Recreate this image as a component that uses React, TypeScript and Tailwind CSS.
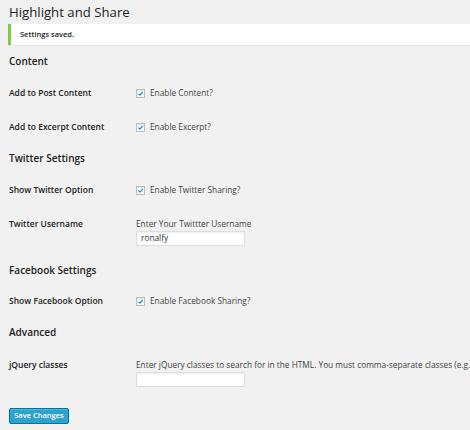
import React from "react";

function Check({ label }: { label: string }) {
  return (
    <label className="flex items-center gap-[5px] text-[8.3px] text-[#444]">
      <span className="flex h-[9px] w-[9px] items-center justify-center border border-[#bbb] bg-white shadow-[inset_0_1px_1px_rgba(0,0,0,0.1)]">
        <svg viewBox="0 0 10 10" className="h-[7px] w-[7px]">
          <path d="M2 5.2 L4.2 7.4 L8.2 2.6" fill="none" stroke="#1e8cbe" strokeWidth="1.8" />
        </svg>
      </span>
      {label}
    </label>
  );
}

function Row({ label, children }: { label: string; children: React.ReactNode }) {
  return (
    <div className="flex h-[34px] items-center">
      <div className="w-[127px] text-[8.5px] font-semibold text-[#222]">{label}</div>
      {children}
    </div>
  );
}

function Heading({ children, className }: { children: React.ReactNode; className: string }) {
  return <h3 className={"h-[16px] text-[10px] font-semibold leading-[16px] text-[#222] " + className}>{children}</h3>;
}

export default function App() {
  return (
    <div className="h-[430px] w-[470px] overflow-hidden bg-[#f1f1f1] pl-[9px] font-['Open_Sans',sans-serif]">
      <h2 className="h-[24px] text-[13.2px] leading-[24px] text-[#222]">Highlight and Share</h2>

      <div className="-ml-[1px] flex h-[21px] items-center border-l-[3px] border-[#7ad03a] bg-white pl-[9px] shadow-[0_1px_1px_rgba(0,0,0,0.05)]">
        <p className="text-[7.5px] font-semibold text-[#222]">Settings saved.</p>
      </div>

      <Heading className="mt-[8px]">Content</Heading>
      <div className="mt-[7px]">
        <Row label="Add to Post Content">
          <Check label="Enable Content?" />
        </Row>
        <Row label="Add to Excerpt Content">
          <Check label="Enable Excerpt?" />
        </Row>
      </div>

      <Heading className="mt-[6px]">Twitter Settings</Heading>
      <div className="mt-[7px]">
        <Row label="Show Twitter Option">
          <Check label="Enable Twitter Sharing?" />
        </Row>
      </div>
      <div className="mt-[11px] flex">
        <div className="w-[127px] text-[8.5px] font-semibold leading-[12px] text-[#222]">Twitter Username</div>
        <div>
          <p className="text-[8.3px] leading-[12px] text-[#444]">Enter Your Twittter Username</p>
          <div className="mt-[1px] flex h-[15px] w-[109px] items-center border border-[#ddd] bg-white pl-[4px] text-[8.3px] text-[#333] shadow-[inset_0_1px_2px_rgba(0,0,0,0.07)]">
            ronalfy
          </div>
        </div>
      </div>

      <Heading className="mt-[16px]">Facebook Settings</Heading>
      <div className="mt-[6px]">
        <Row label="Show Facebook Option">
          <Check label="Enable Facebook Sharing?" />
        </Row>
      </div>

      <Heading className="mt-[6px]">Advanced</Heading>
      <div className="mt-[19px] flex">
        <div className="w-[127px] shrink-0 text-[8.5px] font-semibold leading-[12px] text-[#222]">jQuery classes</div>
        <div className="min-w-0">
          <p className="whitespace-nowrap text-[8.3px] leading-[12px] text-[#444]">
            Enter jQuery classes to search for in the HTML. You must comma-separate classes (e.g., .entry-content, .post).
          </p>
          <div className="mt-[1px] h-[15px] w-[109px] border border-[#ddd] bg-white shadow-[inset_0_1px_2px_rgba(0,0,0,0.07)]" />
        </div>
      </div>

      <button className="mt-[21px] flex h-[16px] w-[60px] items-center justify-center rounded-[2px] border border-[#0074a2] bg-[#2ea2cc] text-[7.5px] font-semibold text-white shadow-[inset_0_1px_0_rgba(120,200,230,0.5)]">
        Save Changes
      </button>
    </div>
  );
}
